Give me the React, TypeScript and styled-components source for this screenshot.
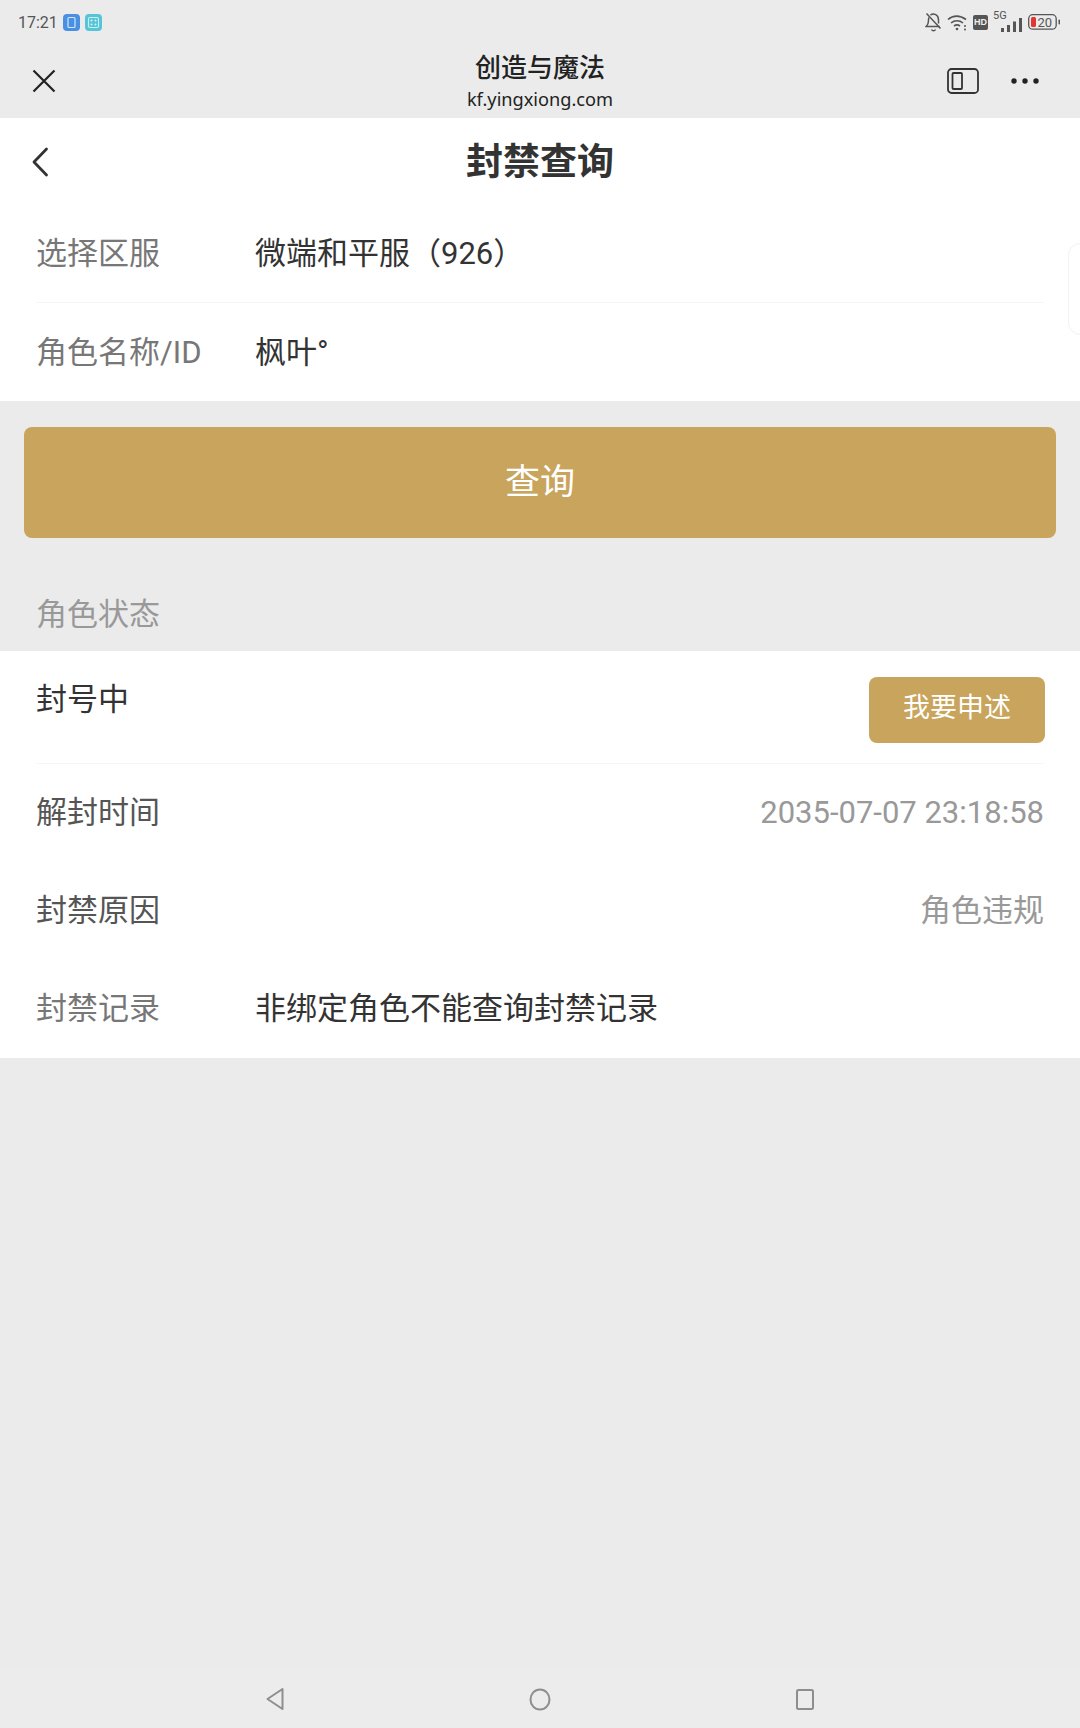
import React from "react";
import styled, { createGlobalStyle } from "styled-components";

const CJK = `Roboto, "Noto Sans CJK SC", sans-serif`;
const GOLD = "#c9a45c";

const Global = createGlobalStyle`
  html, body { margin: 0; padding: 0; background: #ebebeb; }
  * { box-sizing: border-box; }
`;

const Page = styled.div`
  width: 1080px;
  height: 1728px;
  display: flex;
  flex-direction: column;
  background: #ebebeb;
  font-family: ${CJK};
  overflow: hidden;
  position: relative;
`;

const StatusBar = styled.div`
  height: 44px;
  flex: none;
  display: flex;
  align-items: center;
  justify-content: space-between;
  padding: 0 19px 0 18px;
`;
const StatusGroup = styled.div<{ $gap: number }>`
  display: flex;
  align-items: center;
  gap: ${(p) => p.$gap}px;
`;
const Clock = styled.span`
  font-size: 16px;
  color: #555;
`;
const BrowserBar = styled.div`
  height: 74px;
  flex: none;
  display: grid;
  grid-template-columns: 1fr auto 1fr;
  align-items: center;
  padding: 0 40px 0 30px;
`;
const BrowserTitles = styled.div`
  display: flex;
  flex-direction: column;
  align-items: center;
  margin: -1px 0 0 10px;
`;
const SiteName = styled.div`
  font-size: 26px;
  line-height: 36px;
  font-weight: 500;
  color: #222;
`;
const SiteUrl = styled.div`
  font-family: "Noto Sans", sans-serif;
  font-size: 18.2px;
  line-height: 26px;
  color: #222;
`;
const BrowserIcons = styled.div`
  display: flex;
  align-items: center;
  justify-content: flex-end;
  gap: 31px;
`;
const Sheet = styled.section`
  background: #fff;
  flex: none;
`;
const Header = styled.div`
  height: 84px;
  padding-bottom: 2px;
  position: relative;
  display: flex;
  align-items: center;
  justify-content: center;
`;
const HeaderTitle = styled.h1`
  margin: 0;
  font-size: 37px;
  font-weight: 700;
  color: #333;
`;
const Back = styled.span`
  position: absolute;
  left: 31px;
  top: 29px;
  display: flex;
`;
const Row = styled.div<{ $h?: number; $line?: boolean; $start?: boolean; $pad?: number }>`
  height: ${(p) => p.$h ?? 98}px;
  margin: 0 36px;
  padding-bottom: ${(p) => p.$pad ?? 7}px;
  display: flex;
  align-items: ${(p) => (p.$start ? "flex-start" : "center")};
  border-bottom: ${(p) => (p.$line ? "1px solid #f6f6f6" : "none")};
`;
const RowLabel = styled.span<{ $dark?: boolean }>`
  width: 219px;
  flex: none;
  font-size: 31px;
  color: ${(p) => (p.$dark ? "#555" : "#777")};
`;
const RowValue = styled.span`
  font-size: 31px;
  color: #333;
`;
const RowAside = styled.span<{ $latin?: boolean }>`
  margin-left: auto;
  margin-top: ${(p) => (p.$latin ? 5 : 0)}px;
  font-size: 31px;
  color: #999;
`;
const QueryButton = styled.button`
  display: block;
  width: 1032px;
  height: 111px;
  margin: 26px 24px 0;
  padding: 0 0 8px;
  border: none;
  border-radius: 8px;
  background: ${GOLD};
  color: #fff;
  font-family: ${CJK};
  font-size: 35px;
`;
const SectionLabel = styled.div`
  height: 113px;
  padding: 52px 36px 0;
  font-size: 31px;
  line-height: 50px;
  color: #999;
`;
const Appeal = styled.button`
  width: 176px;
  height: 66px;
  margin: 26px -1px 0 auto;
  padding: 0 0 9px;
  border: none;
  border-radius: 8px;
  background: ${GOLD};
  color: #fff;
  font-family: ${CJK};
  font-size: 27px;
`;
const StatusText = styled.span`
  font-size: 31px;
  color: #333;
  margin-top: 23px;
`;
const SideTab = styled.div`
  position: absolute;
  right: -14px;
  top: 243px;
  width: 26px;
  height: 92px;
  border: 1px solid #f2f2f2;
  border-radius: 12px;
  background: #fff;
`;
const Spacer = styled.div`
  flex: 1;
`;
const NavBar = styled.nav`
  height: 60px;
  flex: none;
  display: flex;
  align-items: center;
  justify-content: center;
  gap: 245px;
  padding-top: 2px;
  background: #ececec;
`;

const AppBadge = ({ c }: { c: string }) => (
  <svg width="17" height="17" viewBox="0 0 17 17">
    <rect width="17" height="17" rx="4" fill={c} />
    <rect x="5" y="3.5" width="7" height="10" rx="1" fill="none" stroke="#cfe6fb" strokeWidth="1.2" />
  </svg>
);
const DiceBadge = () => (
  <svg width="17" height="17" viewBox="0 0 17 17">
    <rect width="17" height="17" rx="4" fill="#55c4d6" />
    <rect x="3.5" y="3.5" width="10" height="10" rx="1.5" fill="none" stroke="#c9f0f5" strokeWidth="1.1" />
    <circle cx="6.5" cy="6.5" r="1" fill="#d5f5f8" />
    <circle cx="10.5" cy="10.5" r="1" fill="#d5f5f8" />
    <circle cx="10.5" cy="6.5" r="1" fill="#d5f5f8" />
    <circle cx="6.5" cy="10.5" r="1" fill="#d5f5f8" />
  </svg>
);
const BellOff = () => (
  <svg width="17" height="20" viewBox="0 0 17 20" fill="none" stroke="#555" strokeWidth="1.5">
    <path d="M4 5.5C3.4 6.5 3.4 8 3.4 9.5c0 2.5-1.2 4-2.2 5h13.4" />
    <path d="M5.5 3c3.2-2 8-.5 8 5v3.5" />
    <path d="M1.5 1.5l14 15" />
    <path d="M6.5 17.5a2.2 2.2 0 0 0 4 0" />
  </svg>
);
const Wifi = () => (
  <svg width="21" height="17" viewBox="0 0 21 17" fill="none" stroke="#555" strokeWidth="1.6">
    <path d="M1 5.5c5-4.5 12-4.5 18 0" />
    <path d="M4 9c3.5-3 8.5-3 12 0" />
    <path d="M7 12c2-1.5 4-1.5 6 0" />
    <circle cx="10" cy="15" r="1.3" fill="#555" stroke="none" />
    <circle cx="18" cy="12" r="1" fill="#555" stroke="none" />
    <circle cx="18" cy="15.5" r="1" fill="#555" stroke="none" />
  </svg>
);
const HdBadge = styled.span`
  width: 15px;
  height: 15px;
  border-radius: 2px;
  background: #555;
  color: #eee;
  font-size: 9px;
  font-weight: 700;
  font-family: "Liberation Sans", sans-serif;
  display: flex;
  align-items: center;
  justify-content: center;
`;
const Signal = styled.span`
  position: relative;
  width: 29px;
  height: 20px;
  margin-right: 1px;
  display: flex;
  align-items: flex-end;
  justify-content: flex-end;
`;
const SignalTag = styled.span`
  position: absolute;
  left: 0;
  top: -3px;
  font-size: 11px;
  color: #555;
`;
const Bars = () => (
  <svg width="21" height="14" viewBox="0 0 21 14" fill="#555">
    <rect x="0" y="10" width="3" height="4" />
    <rect x="6" y="7" width="3" height="7" />
    <rect x="12" y="3.5" width="3" height="10.5" />
    <rect x="18" y="0" width="3" height="14" />
  </svg>
);
const Battery = () => (
  <svg width="33" height="16" viewBox="0 0 33 16">
    <rect x="0.7" y="0.7" width="27.5" height="14.5" rx="4" fill="none" stroke="#555" strokeWidth="1.3" />
    <rect x="3" y="3" width="5" height="10" rx="1.5" fill="#e2352f" />
    <rect x="30.5" y="5.5" width="1.5" height="5" rx="0.7" fill="#555" />
    <text x="9.5" y="13" fontSize="13" fill="#555" fontFamily="Roboto, sans-serif">20</text>
  </svg>
);
const CloseIcon = () => (
  <svg width="28" height="28" viewBox="0 0 28 28" stroke="#222" strokeWidth="2.2" fill="none">
    <path d="M3.5 3.5l21 21M24.5 3.5l-21 21" />
  </svg>
);
const PanelIcon = () => (
  <svg width="32" height="26" viewBox="0 0 32 26" fill="none" stroke="#333" strokeWidth="1.8">
    <rect x="1" y="1" width="30" height="24" rx="3.5" />
    <rect x="5.5" y="5" width="9.5" height="16" rx="1" />
  </svg>
);
const MoreIcon = () => (
  <svg width="30" height="6" viewBox="0 0 30 6" fill="#222">
    <circle cx="4" cy="3" r="2.7" />
    <circle cx="15" cy="3" r="2.7" />
    <circle cx="26" cy="3" r="2.7" />
  </svg>
);
const BackIcon = () => (
  <svg width="20" height="30" viewBox="0 0 20 30" fill="none" stroke="#333" strokeWidth="2.8" strokeLinecap="round" strokeLinejoin="round">
    <path d="M15.5 2L3 15l12.5 13" />
  </svg>
);
const NavBack = () => (
  <svg width="18" height="24" viewBox="0 0 18 24" fill="none" stroke="#8e8e8e" strokeWidth="2" strokeLinejoin="round">
    <path d="M16.5 2v20L1.5 12z" />
  </svg>
);
const NavHome = () => (
  <svg width="22" height="23" viewBox="0 0 22 23" fill="none" stroke="#8e8e8e" strokeWidth="2">
    <ellipse cx="11" cy="11.5" rx="9.5" ry="10" />
  </svg>
);
const NavSquare = () => (
  <svg width="18" height="21" viewBox="0 0 18 21" fill="none" stroke="#8e8e8e" strokeWidth="2">
    <rect x="1" y="1" width="16" height="19" rx="1.5" />
  </svg>
);

export default function App() {
  return (
    <Page>
      <Global />
      <StatusBar>
        <StatusGroup $gap={5}>
          <Clock>17:21</Clock>
          <AppBadge c="#4a90e2" />
          <DiceBadge />
        </StatusGroup>
        <StatusGroup $gap={5}>
          <BellOff />
          <Wifi />
          <HdBadge>HD</HdBadge>
          <Signal>
            <SignalTag>5G</SignalTag>
            <Bars />
          </Signal>
          <Battery />
        </StatusGroup>
      </StatusBar>
      <BrowserBar>
        <CloseIcon />
        <BrowserTitles>
          <SiteName>创造与魔法</SiteName>
          <SiteUrl>kf.yingxiong.com</SiteUrl>
        </BrowserTitles>
        <BrowserIcons>
          <PanelIcon />
          <MoreIcon />
        </BrowserIcons>
      </BrowserBar>
      <Sheet>
        <Header>
          <Back>
            <BackIcon />
          </Back>
          <HeaderTitle>封禁查询</HeaderTitle>
        </Header>
        <Row $h={101} $line $pad={3}>
          <RowLabel>选择区服</RowLabel>
          <RowValue>微端和平服（926）</RowValue>
        </Row>
        <Row $pad={6}>
          <RowLabel>角色名称/ID</RowLabel>
          <RowValue>枫叶°</RowValue>
        </Row>
        <SideTab />
      </Sheet>
      <QueryButton>查询</QueryButton>
      <SectionLabel>角色状态</SectionLabel>
      <Sheet>
        <Row $h={113} $line $start $pad={0}>
          <StatusText>封号中</StatusText>
          <Appeal>我要申述</Appeal>
        </Row>
        <Row>
          <RowLabel $dark>解封时间</RowLabel>
          <RowAside $latin>2035-07-07 23:18:58</RowAside>
        </Row>
        <Row>
          <RowLabel $dark>封禁原因</RowLabel>
          <RowAside>角色违规</RowAside>
        </Row>
        <Row>
          <RowLabel>封禁记录</RowLabel>
          <RowValue>非绑定角色不能查询封禁记录</RowValue>
        </Row>
      </Sheet>
      <Spacer />
      <NavBar>
        <NavBack />
        <NavHome />
        <NavSquare />
      </NavBar>
    </Page>
  );
}
